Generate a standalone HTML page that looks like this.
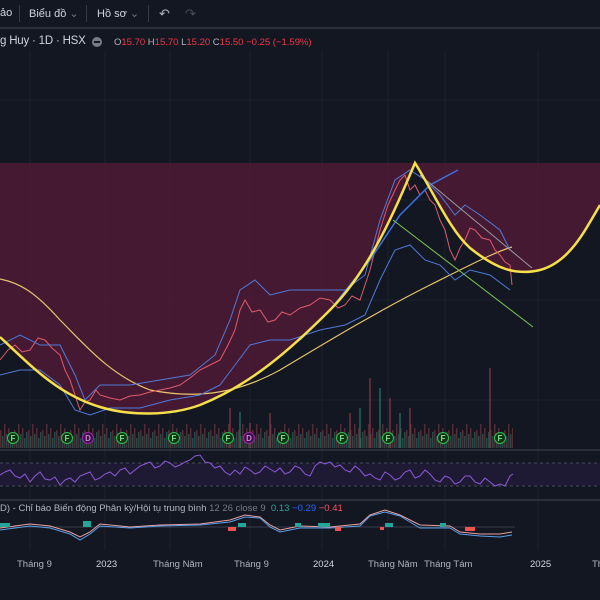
<!DOCTYPE html>
<html><head><meta charset="utf-8"><style>
body{margin:0;width:600px;height:600px;background:#0f1118;overflow:hidden;font-family:"Liberation Sans",sans-serif;position:relative}
.tb{position:absolute;left:0;top:0;width:600px;height:27px;background:#131722;border-bottom:2px solid #2a2e39}
.t{position:absolute;color:#d1d4dc;font-size:11px;white-space:nowrap}
svg{position:absolute;left:0;top:0}
</style></head><body>
<div class="tb"></div>
<div class="t" style="left:0;top:7px">ảo</div>
<div style="position:absolute;left:19px;top:5px;width:1px;height:17px;background:#363a45"></div>
<div class="t" style="left:29px;top:7px">Biểu đồ <span style="color:#787b86">⌄</span></div>
<div style="position:absolute;left:86px;top:5px;width:1px;height:17px;background:#363a45"></div>
<div class="t" style="left:97px;top:7px">Hồ sơ <span style="color:#787b86">⌄</span></div>
<div style="position:absolute;left:148px;top:5px;width:1px;height:17px;background:#363a45"></div>
<div class="t" style="left:159px;top:6px;color:#b2b5be;font-size:13px">↶</div>
<div class="t" style="left:185px;top:6px;color:#4a4e59;font-size:13px">↷</div>
<div class="t" style="left:0;top:35px;font-size:11.5px;letter-spacing:-0.2px">g Huy · 1D · HSX</div>
<div style="position:absolute;left:92px;top:37px;width:10px;height:10px;border-radius:5px;background:#787b86"><div style="margin:4px 2px;height:2px;background:#131722"></div></div>
<div class="t" style="left:114px;top:37px;font-size:9.5px;color:#b2b5be">O<span style="color:#f23645">15.70</span> H<span style="color:#f23645">15.70</span> L<span style="color:#f23645">15.20</span> C<span style="color:#f23645">15.50</span> <span style="color:#f23645">−0.25 (−1.59%)</span></div>

<svg width="600" height="600" viewBox="0 0 600 600" style="z-index:-1">
<defs>
<pattern id="vb" width="14" height="40" patternUnits="userSpaceOnUse" x="0" y="408">
<rect x="0" y="22" width="1.5" height="18" fill="#8a3a44"/><rect x="2" y="28" width="1.5" height="12" fill="#2a7a6a"/><rect x="4" y="16" width="1.5" height="24" fill="#8a3a44"/><rect x="6" y="26" width="1.5" height="14" fill="#2a7a6a"/><rect x="8" y="20" width="1.5" height="20" fill="#8a3a44"/><rect x="10" y="30" width="1.5" height="10" fill="#2a7a6a"/><rect x="12" y="24" width="1.5" height="16" fill="#2a7a6a"/>
</pattern>
</defs>
<rect x="0" y="29" width="600" height="571" fill="#131722"/>
<g stroke="#1e222d" stroke-width="1">
<line x1="30" y1="52" x2="30" y2="550"/><line x1="105" y1="52" x2="105" y2="550"/><line x1="170" y1="52" x2="170" y2="550"/><line x1="250" y1="52" x2="250" y2="550"/><line x1="322" y1="52" x2="322" y2="550"/><line x1="388" y1="52" x2="388" y2="550"/><line x1="445" y1="52" x2="445" y2="550"/><line x1="538" y1="52" x2="538" y2="550"/>
<line x1="0" y1="100" x2="600" y2="100"/><line x1="0" y1="200" x2="600" y2="200"/><line x1="0" y1="300" x2="600" y2="300"/><line x1="0" y1="400" x2="600" y2="400"/>
</g>
<path d="M0,163 H600 V205 C585,230 570,262 540,270 C515,276 495,268 470,248 C450,230 435,195 415,163 C395,210 370,270 330,310 C290,350 250,385 200,405 C170,416 130,416 100,407 C60,395 35,370 0,337 Z" fill="#4c1a35" opacity="0.9"/>
<rect x="0" y="408" width="513" height="40" fill="url(#vb)" opacity="0.55"/>
<g stroke-width="2" opacity="0.6">
<path d="M230,448v-40M250,448v-25M270,448v-35M350,448v-35M370,448v-70M390,448v-50M410,448v-40M490,448v-80" stroke="#8a3a44"/>
<path d="M240,448v-36M360,448v-40M380,448v-60M400,448v-35" stroke="#2a7a6a"/>
</g>
<path d="M0,279 C20,283 35,292 60,320 C85,345 110,375 150,390 C200,400 240,392 280,370 C330,340 380,310 430,285 C470,265 495,252 512,247" fill="none" stroke="#e6c36a" stroke-width="1.2"/>
<path d="M0,360 L8,350 L15,345 L22,352 L30,350 L38,338 L45,340 L52,348 L60,355 L65,370 L70,380 L75,395 L80,410 L85,402 L90,400 L96,390 L100,395 L110,398 L120,400 L130,396 L140,395 L150,392 L160,390 L170,388 L180,385 L190,378 L200,370 L210,365 L220,360 L228,345 L235,330 L240,310 L245,300 L252,312 L260,310 L268,322 L275,320 L282,312 L290,315 L300,308 L310,305 L320,298 L330,300 L338,308 L345,305 L352,296 L360,300 L365,285 L370,270 L375,250 L380,230 L388,205 L395,190 L400,180 L405,175 L410,190 L415,185 L420,195 L425,190 L430,200 L435,205 L440,220 L445,230 L450,250 L455,260 L460,248 L465,240 L470,228 L475,230 L482,238 L490,240 L495,250 L500,255 L505,262 L510,265 L512,285" fill="none" stroke="#e05a6a" stroke-width="1"/>
<path d="M0,345 L20,335 L40,345 L60,345 L75,375 L85,400 L100,385 L130,385 L160,380 L190,375 L215,355 L230,320 L240,290 L255,280 L270,295 L290,290 L320,290 L345,290 L365,275 L380,220 L395,180 L410,170 L425,180 L440,195 L455,215 L465,205 L480,215 L500,230 L510,250" fill="none" stroke="#4f7ad8" stroke-width="1"/>
<path d="M0,375 L20,370 L40,370 L60,385 L75,410 L90,415 L110,408 L140,408 L170,400 L200,395 L220,385 L235,365 L250,345 L270,340 L290,340 L320,330 L345,325 L365,315 L380,280 L395,250 L410,245 L425,260 L440,265 L455,280 L470,270 L490,275 L510,290" fill="none" stroke="#4f7ad8" stroke-width="1"/>
<path d="M300,340 L330,310 L370,260 L400,215 L430,185 L458,170" fill="none" stroke="#3f6fe0" stroke-width="1.5"/>
<path d="M420,175 L532,268" stroke="#9b9aa0" stroke-width="1"/>
<path d="M393,220 L533,327" stroke="#7ec850" stroke-width="1"/>
<path d="M0,337 C35,370 60,395 100,407 C130,416 170,416 200,405 C250,385 290,350 330,310 C370,270 395,210 415,163 C435,195 450,230 470,248 C495,268 515,276 540,270 C570,262 585,230 600,205" fill="none" stroke="#f5e04a" stroke-width="2.5"/>
<g font-size="8" font-weight="bold" text-anchor="middle">
<g stroke="#2fbf4a" stroke-width="1" fill="#123318">
<circle cx="13" cy="438" r="5.5"/><circle cx="67" cy="438" r="5.5"/><circle cx="122" cy="438" r="5.5"/><circle cx="174" cy="438" r="5.5"/><circle cx="228" cy="438" r="5.5"/><circle cx="283" cy="438" r="5.5"/><circle cx="342" cy="438" r="5.5"/><circle cx="388" cy="438" r="5.5"/><circle cx="443" cy="438" r="5.5"/><circle cx="500" cy="438" r="5.5"/></g>
<g stroke="#9c27b0" fill="#3a1040"><circle cx="88" cy="438" r="5.5"/><circle cx="249" cy="438" r="5.5"/></g>
<g fill="#7fe08a"><text x="13" y="441">F</text><text x="67" y="441">F</text><text x="122" y="441">F</text><text x="174" y="441">F</text><text x="228" y="441">F</text><text x="283" y="441">F</text><text x="342" y="441">F</text><text x="388" y="441">F</text><text x="443" y="441">F</text><text x="500" y="441">F</text></g>
<g fill="#d080e0"><text x="88" y="441">D</text><text x="249" y="441">D</text></g>
</g>
<line x1="0" y1="450" x2="600" y2="450" stroke="#2a2e39" stroke-width="2"/>
<rect x="0" y="463" width="600" height="23" fill="#1e1a33"/>
<line x1="0" y1="463" x2="600" y2="463" stroke="#4a4e59" stroke-dasharray="3,3"/>
<line x1="0" y1="486" x2="600" y2="486" stroke="#4a4e59" stroke-dasharray="3,3"/>
<path d="M0,475 L5,472 L10,470 L15,476 L20,478 L25,474 L30,482 L35,476 L40,472 L45,479 L50,480 L55,477 L60,485 L65,480 L70,478 L75,482 L80,476 L85,474 L90,472 L95,480 L100,478 L105,474 L110,472 L115,476 L120,470 L125,468 L130,474 L135,470 L140,466 L145,464 L150,462 L155,468 L160,466 L165,461 L170,463 L175,467 L180,465 L185,462 L190,460 L195,456 L200,455 L205,462 L210,463 L215,468 L220,466 L225,472 L230,475 L235,470 L240,474 L245,467 L250,470 L255,474 L260,472 L265,466 L270,469 L275,472 L280,468 L285,474 L290,472 L295,466 L300,468 L305,474 L310,476 L315,466 L320,462 L325,464 L330,462 L335,467 L340,465 L345,470 L350,472 L355,466 L360,470 L365,476 L370,474 L375,478 L380,480 L385,472 L390,475 L395,480 L400,478 L405,472 L410,470 L415,478 L420,476 L425,470 L430,474 L435,480 L440,482 L445,476 L450,478 L455,484 L460,482 L465,476 L470,476 L475,482 L480,484 L485,478 L490,482 L495,486 L500,484 L505,486 L510,476 L513,474" fill="none" stroke="#8c5ad8" stroke-width="1"/>
<line x1="0" y1="500" x2="600" y2="500" stroke="#2a2e39" stroke-width="2"/>
<line x1="0" y1="527" x2="515" y2="527" stroke="#3a3e49"/>
<path d="M0,528 L30,524 L50,526 L70,532 L80,537 L90,532 L100,524 L130,527 L160,525 L200,524 L230,520 L245,515 L260,517 L270,525 L280,530 L300,526 L330,527 L360,524 L370,515 L385,510 L400,515 L410,520 L420,525 L450,526 L460,532 L480,534 L500,534 L512,532" fill="none" stroke="#e8a0a0" stroke-width="1"/>
<path d="M0,530 L30,526 L50,528 L70,534 L80,540 L90,534 L100,526 L130,528 L160,526 L200,525 L230,522 L245,517 L260,518 L270,527 L280,532 L300,528 L330,528 L360,526 L370,516 L385,512 L400,516 L410,522 L420,528 L450,528 L460,534 L480,536 L500,537 L512,535" fill="none" stroke="#5a9ee8" stroke-width="1"/>
<g fill="#26a69a"><rect x="0" y="523" width="10" height="4"/><rect x="83" y="521" width="8" height="6"/><rect x="238" y="523" width="8" height="4"/><rect x="295" y="523" width="6" height="4"/><rect x="318" y="523" width="12" height="4"/><rect x="385" y="523" width="8" height="4"/><rect x="440" y="523" width="6" height="4"/></g>
<g fill="#ef5350"><rect x="228" y="527" width="8" height="4"/><rect x="335" y="527" width="6" height="4"/><rect x="380" y="527" width="4" height="3"/><rect x="465" y="527" width="10" height="4"/></g>
</svg>
<div class="t" style="left:0;top:503px;font-size:9.5px;color:#b2b5be">D) - Chỉ báo Biến động Phân kỳ/Hội tụ trung bình <span style="color:#787b86">12 26 close 9</span> &nbsp;<span style="color:#26a69a">0.13</span> <span style="color:#2962ff">−0.29</span> <span style="color:#f7525f">−0.41</span></div>
<div class="t" style="top:559px;font-size:9.5px;color:#b2b5be;left:17px">Tháng 9</div>
<div class="t" style="top:559px;font-size:9.5px;color:#d1d4dc;left:96px">2023</div>
<div class="t" style="top:559px;font-size:9.5px;color:#b2b5be;left:153px">Tháng Năm</div>
<div class="t" style="top:559px;font-size:9.5px;color:#b2b5be;left:234px">Tháng 9</div>
<div class="t" style="top:559px;font-size:9.5px;color:#d1d4dc;left:313px">2024</div>
<div class="t" style="top:559px;font-size:9.5px;color:#b2b5be;left:368px">Tháng Năm</div>
<div class="t" style="top:559px;font-size:9.5px;color:#b2b5be;left:424px">Tháng Tám</div>
<div class="t" style="top:559px;font-size:9.5px;color:#d1d4dc;left:530px">2025</div>
<div class="t" style="top:559px;font-size:9.5px;color:#b2b5be;left:592px">Th</div>
</body></html>
